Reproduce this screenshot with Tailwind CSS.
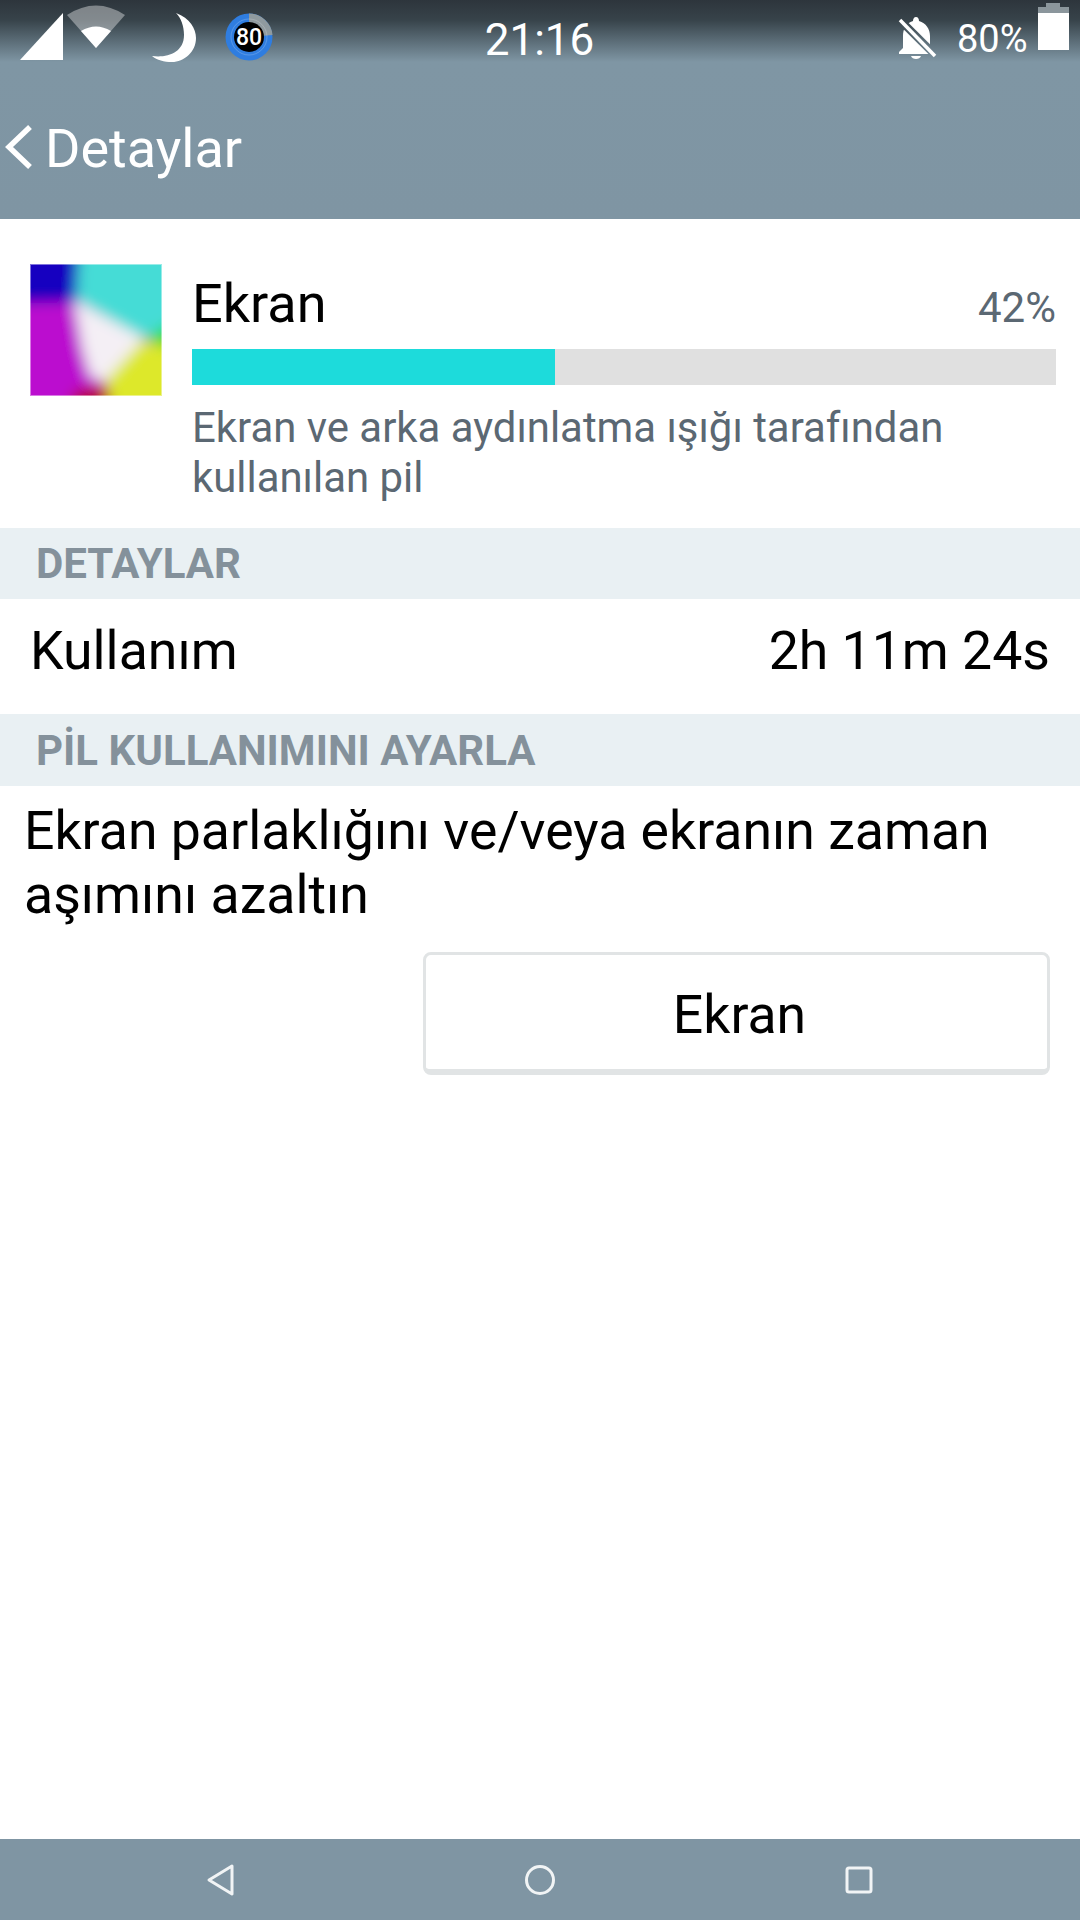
<!DOCTYPE html>
<html lang="tr">
<head>
  <meta charset="UTF-8">
  <meta name="viewport" content="width=device-width, initial-scale=1.0">
  <title>Detaylar</title>
  <script src="https://cdn.jsdelivr.net/npm/@tailwindcss/browser@4"></script>
</head>
<body class="bg-white font-['Roboto',sans-serif]">
  <div class="flex flex-col w-[1080px] h-[1920px] overflow-hidden">

    <!-- Header -->
    <header class="h-[219px] shrink-0 bg-[linear-gradient(to_bottom,#2d353c_0px,#37434a_20px,#7f96a4_62px,#7f95a3_219px)] text-white">
      <!-- Status bar -->
      <div class="relative h-[72px]">
        <div class="flex items-start">
          <svg class="ml-[20px] mt-[13px]" width="44" height="48" viewBox="0 0 44 48"><polygon points="0,47 43,0 43,47" fill="#fff"/></svg>
          <svg class="mt-[5px]" width="62" height="44" viewBox="0 0 62 44">
            <path d="M3 10 Q32 -9 61 10 L32 43Z" fill="#fff" fill-opacity="0.38"/>
            <path d="M17 26 Q32 17 47 26 L32 43Z" fill="#fff"/>
          </svg>
          <svg class="ml-[26px] mt-[13px]" width="46" height="50" viewBox="0 0 46 50">
            <path d="M24 0 C38 5 44 16 44 25 C44 39 32 49 20 49 C12 49 5 47 0 43 C15 45 32 40 32 22 C32 13 29 5 24 0Z" fill="#fff"/>
          </svg>
          <svg class="ml-[27px] mt-[13px]" width="48" height="48" viewBox="0 0 48 48">
            <circle cx="24" cy="24" r="23.5" fill="#2f7de0"/>
            <path d="M24 24 L24 0.5 A23.5 23.5 0 0 1 47.5 22Z" fill="#8f9a9f"/>
            <circle cx="24" cy="24" r="15" fill="#000"/>
            <circle cx="24" cy="24" r="18" fill="none" stroke="#fff" stroke-opacity="0.2" stroke-width="1"/>
            <text x="24" y="32" text-anchor="middle" fill="#fff" font-family="Roboto" font-size="23" font-weight="500">80</text>
          </svg>
        </div>
        <span class="absolute left-0 right-0 top-[14px] text-center text-[44px] leading-[52px] pr-[1px]">21:16</span>
        <svg class="absolute left-[898px] top-[16px]" width="40" height="46" viewBox="0 0 40 46">
          <mask id="slash"><rect width="40" height="46" fill="#fff"/><line x1="1" y1="3" x2="38" y2="40" stroke="#000" stroke-width="8"/></mask>
          <g mask="url(#slash)">
            <path d="M18 1 C16 1 15 3 15 5 C8 7 5 13 5 20 V32 L1 36 V38 H33 V35 L32 32 V20 C32 13 28 7 21 5 C21 3 20 1 18 1Z" fill="#fff"/>
            <path d="M13 40 H23 C22 44 14 44 13 40Z" fill="#fff"/>
          </g>
          <line x1="2" y1="4" x2="37" y2="40" stroke="#fff" stroke-width="3.5"/>
        </svg>
        <span class="absolute left-[957px] top-[17px] text-[38px] leading-[44px]">80%</span>
        <svg class="absolute left-[1038px] top-[3px]" width="31" height="47" viewBox="0 0 31 47">
          <path d="M8 0 H22 V4 H31 V11 H0 V4 H8Z" fill="#8b969c"/>
          <rect y="10" width="31" height="37" fill="#fff"/>
        </svg>
      </div>
      <!-- Title row -->
      <div class="flex items-center h-[156px] -mt-[1px]">
        <svg class="ml-[4px] -mt-[4px] shrink-0" width="30" height="44" viewBox="0 0 30 44"><polyline points="26,2 5,22 26,42" fill="none" stroke="#fff" stroke-width="5.5"/></svg>
        <h1 class="ml-[11px] text-[54px] leading-[60px] font-normal">Detaylar</h1>
      </div>
    </header>

    <!-- App summary -->
    <section class="h-[309px] shrink-0 flex pl-[30px] pr-[24px] pt-[45px]">
      <svg class="shrink-0 mr-[30px]" width="132" height="132" viewBox="0 0 132 132">
        <defs>
          <filter id="soft" x="-20%" y="-20%" width="140%" height="140%"><feGaussianBlur stdDeviation="7"/></filter>
          <clipPath id="box"><rect width="132" height="132"/></clipPath>
        </defs>
        <g clip-path="url(#box)">
          <g filter="url(#soft)">
            <rect x="-20" y="-20" width="172" height="172" fill="#bb0ccf"/>
            <polygon points="-30,-30 50,-30 46,38 -30,40" fill="#1300c0"/>
            <polygon points="50,-30 162,-30 162,62 112,74 46,36" fill="#45dcd6"/>
            <polygon points="162,48 162,98 116,74" fill="#2ee01a"/>
            <polygon points="112,76 162,90 162,162 84,162 74,112" fill="#dde82a"/>
            <polygon points="46,126 78,122 84,162 28,162" fill="#b80d14"/>
            <polygon points="44,36 114,74 74,118 60,112 52,84" fill="#f4eff5"/>
          </g>
        </g>
        <rect x="0.5" y="0.5" width="131" height="131" fill="none" stroke="#fff" stroke-opacity="0.45"/>
      </svg>
      <div class="flex-1 min-w-0">
        <div class="flex justify-between items-end h-[85px] pb-[5px]">
          <span class="text-[54px] leading-[60px] text-black relative -top-[10px]">Ekran</span>
          <span class="text-[42px] leading-[44px] text-[#5b6873] relative -top-[14px]">42%</span>
        </div>
        <div class="h-[36px] bg-[#e0e0e0]">
          <div class="h-full w-[363px] bg-[#1ddbdb]"></div>
        </div>
        <p class="mt-[18px] text-[41.9px] leading-[50px] text-[#5b6873] w-[800px]">Ekran ve arka aydınlatma ışığı tarafından kullanılan pil</p>
      </div>
    </section>

    <div class="h-[71px] shrink-0 flex items-center pl-[36px] bg-[#e9f0f3] text-[42px] font-bold text-[#84919b]">DETAYLAR</div>

    <div class="h-[115px] shrink-0 flex items-center justify-between pl-[30px] pr-[30px] pb-[10px] text-[53.6px] text-black">
      <span>Kullanım</span>
      <span>2h 11m 24s</span>
    </div>

    <div class="h-[72px] shrink-0 flex items-center pl-[36px] bg-[#e9f0f3] text-[42px] font-bold text-[#84919b]">PİL KULLANIMINI AYARLA</div>

    <!-- Tip -->
    <main class="flex-1 flex flex-col pl-[24px] pr-[30px] pt-[13px]">
      <p class="text-[53.6px] leading-[64px] text-black">Ekran parlaklığını ve/veya ekranın zaman aşımını azaltın</p>
      <button class="self-end mt-[25px] w-[627px] h-[123px] pl-[6px] pt-[6px] bg-white border-[3px] border-b-[6px] border-[#e1e4e5] rounded-[8px] text-[53.5px] text-black">Ekran</button>
    </main>

    <!-- Navigation bar -->
    <nav class="h-[81px] shrink-0 bg-[#7f95a3] flex items-center">
      <svg class="ml-[206px]" width="30" height="34" viewBox="0 0 30 34"><path d="M26 3 L3 17 L26 31Z" fill="none" stroke="#f1f4f5" stroke-width="3" stroke-linejoin="round"/></svg>
      <svg class="ml-[288px]" width="32" height="32" viewBox="0 0 32 32"><circle cx="16" cy="16" r="13.5" fill="none" stroke="#f1f4f5" stroke-width="3"/></svg>
      <svg class="ml-[289px]" width="28" height="28" viewBox="0 0 28 28"><rect x="2" y="2" width="24" height="24" rx="2" fill="none" stroke="#f1f4f5" stroke-width="3"/></svg>
    </nav>
  </div>
</body>
</html>
